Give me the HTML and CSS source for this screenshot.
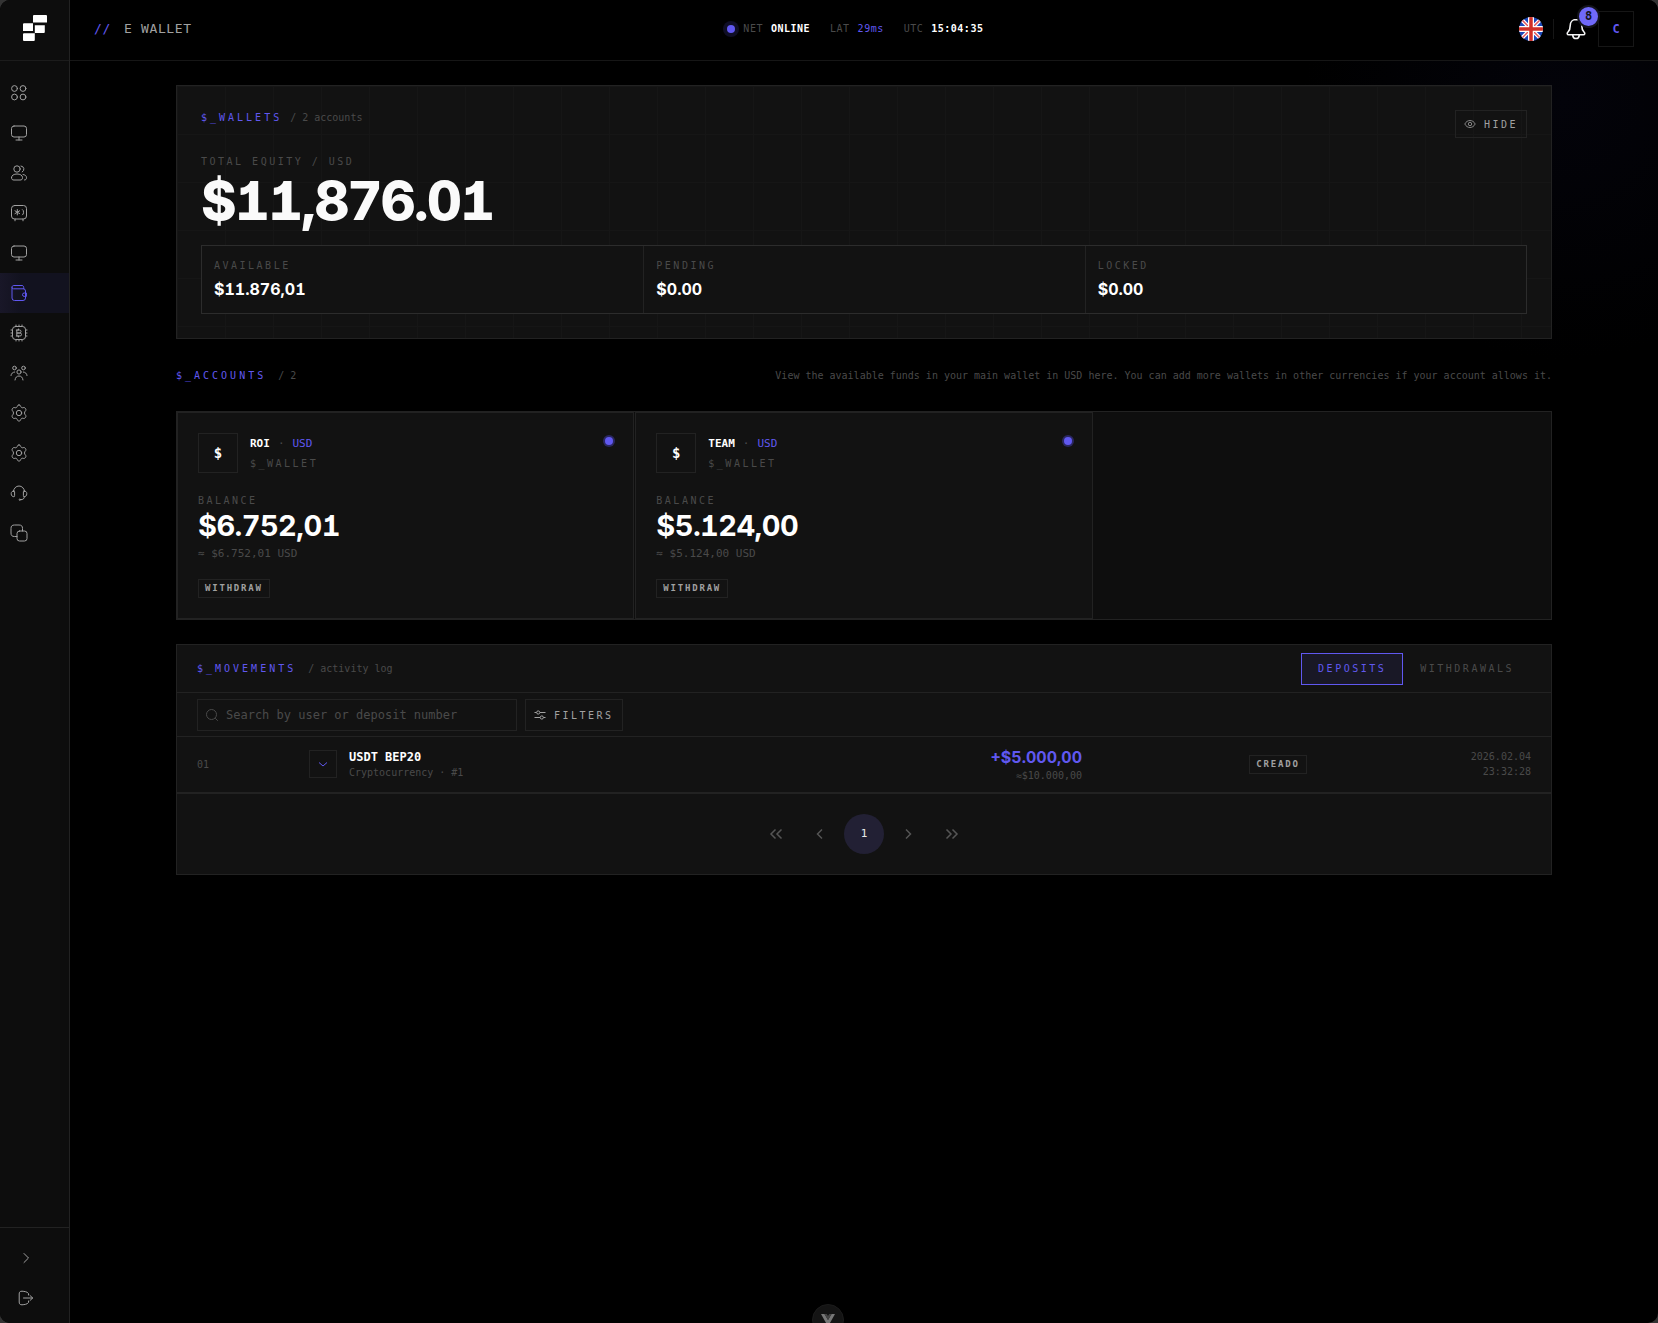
FILE: index.html
```html
<!DOCTYPE html>
<html lang="en">

<head>
    <meta charset="UTF-8">
    <meta name="viewport" content="width=device-width, initial-scale=1.0">
    <title>E Wallet</title>
    <link rel="stylesheet" href="styles.css">
</head>

<body>

    <div class="app">
        <aside class="sidebar">
            <a class="logo" href="#" aria-label="Home">
                <svg width="24" height="27" viewBox="0 0 24 27" fill="#fff">
                    <path d="M11 0h12a1 1 0 0 1 1 1v6.500h-14v-6.500a1 1 0 0 1 1-1z" />
                    <path d="M1 8.300h9v7.700h-10v-6.700a1 1 0 0 1 1-1z" />
                    <path d="M11.800 10.300h10v6.700a1 1 0 0 1-1 1h-9z" />
                    <path d="M1 18.300h10.800v6.700a1 1 0 0 1-1 1h-9.800a1 1 0 0 1-1-1v-5.700a1 1 0 0 1 1-1z" />
                </svg>
            </a>

            <nav class="side-nav" aria-label="Main">
                <a class="side-link" href="#" aria-label="Dashboard">
                    <svg class="icon" viewBox="0 0 18 18"><circle cx="4.500" cy="4.500" r="2.900" /><circle cx="13" cy="4.500" r="2.900" /><circle cx="4.500" cy="13" r="2.900" /><circle cx="13" cy="13" r="2.900" /></svg>
                </a>
                <a class="side-link" href="#" aria-label="Platform">
                    <svg class="icon" viewBox="0 0 18 18"><rect x="1.500" y="2" width="15" height="11" rx="2.500" /><path d="M9 13v3M6 16h6" /></svg>
                </a>
                <a class="side-link" href="#" aria-label="Users">
                    <svg class="icon" viewBox="0 0 18 18"><circle cx="7" cy="5" r="3.200" /><path d="M11 2a3.200 3.200 0 0 1 1.200 6M1.500 13.500c0-2.200 2.400-3.500 5.500-3.500s5.500 1.300 5.500 3.500-1 2.500-2.500 2.500h-6c-1.500 0-2.500-.3-2.500-2.500zM13 10.500c2.200.3 3.500 1.400 3.500 3.200 0 1.500-.6 2.200-2 2.300" /></svg>
                </a>
                <a class="side-link" href="#" aria-label="Vault">
                    <svg class="icon" viewBox="0 0 18 18"><rect x="1.500" y="1.500" width="15" height="13.500" rx="3" /><path d="M5 15v1.800M13 15v1.800M7.300 5.500v5.400M5 6.800l4.600 2.800M9.600 6.800l-4.600 2.800M12.500 5.500c1.500.5 1.500 5 0 5.500" /></svg>
                </a>
                <a class="side-link" href="#" aria-label="Terminal">
                    <svg class="icon" viewBox="0 0 18 18"><rect x="1.500" y="2" width="15" height="11" rx="2.500" /><path d="M9 13v3M6 16h6" /></svg>
                </a>
                <a class="side-link active" href="#" aria-label="E Wallet" aria-current="page">
                    <svg class="icon" viewBox="0 0 18 18"><path d="M2 3.500v10.500a2.500 2.500 0 0 0 2.500 2.500h8.500a2.500 2.500 0 0 0 2.500-2.500v-7a2.200 2.200 0 0 0-2.200-2.200h-9.800a1.500 1.500 0 0 1-1.500-1.500c0-1 .6-1.800 1.800-1.800h8.200c1.300 0 1.800.8 1.800 3.300M16 9h-1.800a1.700 1.700 0 0 0 0 3.400h1.800z" /></svg>
                </a>
                <a class="side-link" href="#" aria-label="Mining">
                    <svg class="icon" viewBox="0 0 18 18"><rect x="2.500" y="2.500" width="13" height="13" rx="3" /><path d="M6 2.500v-1.500M9 2.500v-1.500M12 2.500v-1.500M6 17v-1.500M9 17v-1.500M12 17v-1.500M2.500 6h-1.500M2.500 9h-1.500M2.500 12h-1.500M17 6h-1.500M17 9h-1.500M17 12h-1.500M7.200 6h2.300a1.500 1.500 0 0 1 0 3h-2.300zM7.200 9h2.800a1.500 1.500 0 0 1 0 3h-2.800zM8.500 5v1M8.500 12v1M6.300 6h1M6.300 12h1" /></svg>
                </a>
                <a class="side-link" href="#" aria-label="Team">
                    <svg class="icon" viewBox="0 0 18 18"><circle cx="4.500" cy="4" r="1.800" /><circle cx="13.500" cy="4" r="1.800" /><circle cx="9" cy="8" r="2.100" /><path d="M5 16c.3-2.600 1.800-4 4-4s3.700 1.400 4 4M1 11.500c.2-2 1.600-3.300 3.700-3.500M17 11.500c-.2-2-1.600-3.300-3.700-3.500" /></svg>
                </a>
                <a class="side-link" href="#" aria-label="Settings">
                    <svg class="icon" viewBox="0 0 18 18"><path d="M9 1c1.300 0 1.500.6 1.800 1.600.3.900 1.200 1.400 2.200 1.100 1.100-.3 1.900-.2 2.600 1 .6 1.100.4 1.700-.4 2.500-.9 1-.9 2.600 0 3.600.8.8 1 1.400.4 2.500-.7 1.200-1.500 1.300-2.600 1-1-.3-1.900.2-2.200 1.100-.3 1-.5 1.600-1.800 1.600s-1.500-.6-1.800-1.600c-.3-.9-1.200-1.400-2.200-1.100-1.100.3-1.900.2-2.600-1-.6-1.100-.4-1.700.4-2.500.9-1 .9-2.600 0-3.600-.8-.8-1-1.400-.4-2.500.7-1.200 1.500-1.300 2.600-1 1 .3 1.900-.2 2.200-1.100.3-1 .5-1.600 1.800-1.600z" /><circle cx="9" cy="9" r="2.700" /></svg>
                </a>
                <a class="side-link" href="#" aria-label="Configuration">
                    <svg class="icon" viewBox="0 0 18 18"><path d="M9 1c1.300 0 1.500.6 1.800 1.600.3.900 1.200 1.400 2.200 1.100 1.100-.3 1.900-.2 2.600 1 .6 1.100.4 1.700-.4 2.500-.9 1-.9 2.600 0 3.600.8.8 1 1.400.4 2.500-.7 1.200-1.500 1.300-2.600 1-1-.3-1.900.2-2.200 1.100-.3 1-.5 1.600-1.800 1.600s-1.500-.6-1.800-1.600c-.3-.9-1.200-1.400-2.200-1.100-1.100.3-1.900.2-2.600-1-.6-1.100-.4-1.700.4-2.500.9-1 .9-2.600 0-3.600-.8-.8-1-1.400-.4-2.500.7-1.200 1.500-1.300 2.600-1 1 .3 1.900-.2 2.200-1.100.3-1 .5-1.600 1.800-1.600z" /><circle cx="9" cy="9" r="2.700" /></svg>
                </a>
                <a class="side-link" href="#" aria-label="Support">
                    <svg class="icon" viewBox="0 0 18 18"><path d="M3.500 7.500a5.500 5.500 0 0 1 11 0M3.800 7c-1.500 0-2.600.8-2.600 2.700s1.100 3 2.600 3c.7 0 .8-.4.800-1v-3.700c0-.6-.1-1-.8-1zM14.200 7c1.500 0 2.600.8 2.600 2.700s-1.100 3-2.600 3c-.7 0-.8-.4-.8-1v-3.700c0-.6.1-1 .8-1zM14.300 12.700c0 2-1 3-3.500 3M10.800 15.700c0-.8-1.800-.8-1.800 0s1.800.8 1.800 0z" /></svg>
                </a>
                <a class="side-link" href="#" aria-label="Copy">
                    <svg class="icon" viewBox="0 0 18 18"><rect x="7" y="7" width="10" height="10" rx="2.500" /><path d="M7 12.500h-2.500c-2.500 0-3.500-1-3.500-3.500v-4.500c0-2.500 1-3.500 3.500-3.500h4.500c2.500 0 3.500 1 3.500 3.500v2.500" /></svg>
                </a>
            </nav>

            <div class="side-foot">
                <button class="side-button" type="button" aria-label="Expand menu">
                    <svg class="icon" viewBox="0 0 18 18"><path d="M7 4.500l4.500 4.500-4.500 4.500" /></svg>
                </button>
                <button class="side-button" type="button" aria-label="Log out">
                    <svg class="icon" viewBox="0 0 18 18"><path d="M11.500 6v-1.500c-1.500-2-4-2-6.500-2.300-2 0-2.800.8-2.800 2.800v8c0 2 .8 2.800 2.800 2.800 2.500-.3 5-.3 6.500-2.300v-1.500M6.500 9h9M13 6.500l2.700 2.500-2.700 2.500" /></svg>
                </button>
            </div>
        </aside>

        <div class="content">
            <header class="topbar">
                <div class="page-name">
                    <span class="accent">//</span>
                    <h1 class="page-title">E WALLET</h1>
                </div>

                <div class="status">
                    <div class="status-item"><i class="live-dot"></i><span>NET</span><b>ONLINE</b></div>
                    <div class="status-item"><span>LAT</span><span class="accent">29ms</span></div>
                    <div class="status-item"><span>UTC</span><b>15:04:35</b></div>
                </div>

                <div class="tools">
                    <button class="flag" type="button" aria-label="Language: English">
                        <svg width="24" height="24" viewBox="0 0 24 24">
                            <defs><clipPath id="flag-clip"><circle cx="12" cy="12" r="12" /></clipPath></defs>
                            <g clip-path="url(#flag-clip)">
                                <path fill="#1a47b8" d="M0 0h24v24h-24z" />
                                <path stroke="#fff" stroke-width="3.800" d="M0 0l24 24M24 0l-24 24" />
                                <path stroke="#e0535a" stroke-width="1.500" d="M0 0l24 24M24 0l-24 24" />
                                <path stroke="#fff" stroke-width="6" d="M12 0v24M0 12h24" />
                                <path stroke="#d03027" stroke-width="3.500" d="M12 0v24M0 12h24" />
                            </g>
                        </svg>
                    </button>
                    <span class="tools-line"></span>
                    <button class="bell" type="button" aria-label="Notifications">
                        <svg width="20" height="22" viewBox="0 0 20 22" fill="none" stroke="#f4f4f5" stroke-width="1.600" stroke-linejoin="round">
                            <path d="M10 1.500c-3.500 0-5.800 2.500-5.800 6.200 0 3.300-.6 4.700-2.200 6.300-1.300 1.300-1 2.800.8 2.800h14.400c1.800 0 2.100-1.500.8-2.800-1.600-1.600-2.200-3-2.200-6.300 0-3.700-2.300-6.200-5.800-6.200zM6.700 17.300c.3 2 1.500 3.200 3.300 3.200s3-1.200 3.300-3.200" />
                        </svg>
                        <span class="badge">8</span>
                    </button>
                    <button class="avatar" type="button" aria-label="Account">C</button>
                </div>
            </header>

            <main class="main">
                <section class="hero">
                    <div class="hero-head">
                        <div class="heading">
                            <h2 class="heading-title">$_WALLETS</h2>
                            <span class="heading-note">/ 2 accounts</span>
                        </div>
                        <button class="outline-button" type="button">
                            <svg width="12" height="12" viewBox="0 0 12 12" fill="none" stroke="currentColor" stroke-width=".8"><path d="M.8 6c1.200-2.300 3-3.500 5.200-3.500s4 1.200 5.200 3.500c-1.200 2.300-3 3.500-5.200 3.500s-4-1.200-5.200-3.500z" /><circle cx="6" cy="6" r="1.700" /></svg>
                            HIDE
                        </button>
                    </div>
                    <div class="label">TOTAL EQUITY / USD</div>
                    <div class="equity">$11,876.01</div>
                    <div class="stats">
                        <div class="stat">
                            <div class="label">AVAILABLE</div>
                            <div class="stat-value">$11.876,01</div>
                        </div>
                        <div class="stat">
                            <div class="label">PENDING</div>
                            <div class="stat-value">$0.00</div>
                        </div>
                        <div class="stat">
                            <div class="label">LOCKED</div>
                            <div class="stat-value">$0.00</div>
                        </div>
                    </div>
                </section>

                <div class="accounts-head">
                    <div class="heading wide">
                        <h2 class="heading-title">$_ACCOUNTS</h2>
                        <span class="heading-note">/ 2</span>
                    </div>
                    <p class="heading-note">View the available funds in your main wallet in USD here. You can add more wallets in other currencies if your account allows it.</p>
                </div>

                <section class="accounts">
                    <article class="account">
                        <div class="account-head">
                            <span class="coin">$</span>
                            <div class="account-names">
                                <div class="account-name"><b>ROI</b><span class="muted">·</span><span class="accent">USD</span></div>
                                <div class="label">$_WALLET</div>
                            </div>
                            <i class="account-dot"></i>
                        </div>
                        <div class="label">BALANCE</div>
                        <div class="balance">$6.752,01</div>
                        <div class="approx">≈ $6.752,01 USD</div>
                        <button class="tag" type="button">WITHDRAW</button>
                    </article>
                    <article class="account">
                        <div class="account-head">
                            <span class="coin">$</span>
                            <div class="account-names">
                                <div class="account-name"><b>TEAM</b><span class="muted">·</span><span class="accent">USD</span></div>
                                <div class="label">$_WALLET</div>
                            </div>
                            <i class="account-dot"></i>
                        </div>
                        <div class="label">BALANCE</div>
                        <div class="balance">$5.124,00</div>
                        <div class="approx">≈ $5.124,00 USD</div>
                        <button class="tag" type="button">WITHDRAW</button>
                    </article>
                </section>

                <section class="movements">
                    <div class="movements-head">
                        <div class="heading wide">
                            <h2 class="heading-title">$_MOVEMENTS</h2>
                            <span class="heading-note">/ activity log</span>
                        </div>
                        <div class="tabs">
                            <button class="tab active" type="button">DEPOSITS</button>
                            <button class="tab" type="button">WITHDRAWALS</button>
                        </div>
                    </div>

                    <div class="filters">
                        <label class="search">
                            <svg width="12" height="12" viewBox="0 0 12 12" fill="none" stroke="currentColor"><circle cx="5.500" cy="5.500" r="5" /><path d="M9.200 9.200l2.600 2.600" /></svg>
                            <input type="text" placeholder="Search by user or deposit number" aria-label="Search by user or deposit number">
                        </label>
                        <button class="outline-button" type="button">
                            <svg width="12" height="12" viewBox="0 0 12 12" fill="none" stroke="currentColor"><path d="M.5 3.500h2M6 3.500h5.500M.5 8.500h5.500M9.500 8.500h2" /><circle cx="4.200" cy="3.500" r="1.600" /><circle cx="7.800" cy="8.500" r="1.600" /></svg>
                            FILTERS
                        </button>
                    </div>

                    <table class="log">
                        <colgroup>
                            <col class="col-index">
                            <col>
                            <col class="col-amount">
                            <col class="col-state">
                            <col class="col-date">
                        </colgroup>
                        <tbody>
                            <tr>
                                <td class="muted">01</td>
                                <td>
                                    <div class="method">
                                        <button class="toggle" type="button" aria-label="Show details">
                                            <svg width="12" height="12" viewBox="0 0 12 12" fill="none" stroke="currentColor"><path d="M2 4.500l4 3.500 4-3.500" /></svg>
                                        </button>
                                        <div>
                                            <div class="method-name">USDT BEP20</div>
                                            <div class="muted">Cryptocurrency · #1</div>
                                        </div>
                                    </div>
                                </td>
                                <td class="right">
                                    <div class="amount">+$5.000,00</div>
                                    <div class="muted">≈$10.000,00</div>
                                </td>
                                <td class="center"><span class="tag">CREADO</span></td>
                                <td class="date muted">2026.02.04 23:32:28</td>
                            </tr>
                        </tbody>
                    </table>

                    <nav class="pager" aria-label="Pagination">
                        <button class="page" type="button" aria-label="First page">
                            <svg width="14" height="12" viewBox="0 0 14 12"><path d="M6.500 1.500l-4.500 4.500 4.500 4.500M12.500 1.500l-4.500 4.500 4.500 4.500" /></svg>
                        </button>
                        <button class="page" type="button" aria-label="Previous page">
                            <svg width="14" height="12" viewBox="0 0 14 12"><path d="M9 1.500l-4.500 4.500 4.500 4.500" /></svg>
                        </button>
                        <button class="page current" type="button" aria-current="page">1</button>
                        <button class="page" type="button" aria-label="Next page">
                            <svg width="14" height="12" viewBox="0 0 14 12"><path d="M5 1.500l4.500 4.500-4.500 4.500" /></svg>
                        </button>
                        <button class="page" type="button" aria-label="Last page">
                            <svg width="14" height="12" viewBox="0 0 14 12"><path d="M1.500 1.500l4.500 4.500-4.500 4.500M7.500 1.500l4.500 4.500-4.500 4.500" /></svg>
                        </button>
                    </nav>
                </section>
            </main>
        </div>

        <button class="devtools" type="button" aria-label="Toggle devtools">
            <svg width="16" height="14" viewBox="0 0 16 14"><path fill="#777" d="M1 0h3.500l3.500 6 3.500-6h3.500l-7 12.500z" /><path fill="#444" d="M4.500 0h2.300l1.200 2 1.200-2h2.300l-3.500 6z" /></svg>
        </button>
    </div>

</body>

</html>
```
FILE: styles.css
```css
* {
    box-sizing: border-box;
}

:root {
    --accent: #6058f0;
    --line: #222;
    --panel: #121212;
    --muted: #4a4a4a;
    --soft: #a1a1a1;
    --mono: "DejaVu Sans Mono", monospace;
    --sans: Inter, sans-serif;
}

body {
    margin: 0;
    background-color: #333;
    color: #fff;
    font-family: var(--mono);
    font-size: 10px;
    line-height: 15px;
}

h1,
h2,
p {
    margin: 0;
    font-size: inherit;
    font-weight: normal;
}

button,
input {
    font: inherit;
    color: inherit;
    background: none;
    border: none;
    padding: 0;
}

button {
    cursor: pointer;
}

svg {
    display: block;
    flex: none;
}

.accent {
    color: var(--accent);
}

.muted {
    color: var(--muted);
}

.app {
    display: flex;
    min-height: 100vh;
    background-color: #000;
    border-radius: 10px;
    overflow: hidden;
}

/* sidebar */
.sidebar {
    display: flex;
    flex-direction: column;
    flex: none;
    width: 70px;
    background-color: #0d0d0d;
    border-right: 1px solid var(--line);
}

.logo {
    display: flex;
    align-items: center;
    justify-content: center;
    height: 61px;
    padding-bottom: 4px;
    border-bottom: 1px solid #1c1c1c;
}

.side-nav {
    flex: 1;
    padding-top: 12px;
}

.side-link,
.side-button {
    display: flex;
    align-items: center;
    width: 100%;
    height: 40px;
    padding-left: 10px;
    color: var(--soft);
}

.side-button {
    padding-left: 17px;
}

.side-link.active {
    color: var(--accent);
    background: linear-gradient(90deg, #191728, #12121f 30%);
}

.icon {
    width: 18px;
    height: 18px;
    fill: none;
    stroke: currentColor;
    stroke-linecap: round;
    stroke-linejoin: round;
}

.side-foot {
    padding: 10px 0 5px;
    border-top: 1px solid var(--line);
}

/* top bar */
.content {
    flex: 1;
    min-width: 0;
    background: radial-gradient(circle at 94% 100px, #03030a, transparent 260px);
}

.topbar {
    display: flex;
    align-items: center;
    justify-content: space-between;
    height: 61px;
    padding: 0 24px 2px;
    background-color: #000;
    border-bottom: 1px solid #161616;
}

.page-name {
    display: flex;
    gap: 13px;
    padding-bottom: 2px;
    font-size: 13px;
    letter-spacing: 0.05em;
}

.page-title {
    color: var(--soft);
}

.status {
    display: flex;
    gap: 20px;
    padding-bottom: 2px;
    letter-spacing: 0.05em;
    color: var(--muted);
}

.status-item {
    display: flex;
    align-items: center;
    gap: 8px;
}

.status-item b {
    color: #fff;
}

.live-dot {
    width: 8px;
    height: 8px;
    margin-top: 2px;
    border-radius: 50%;
    background-color: var(--accent);
    box-shadow: 0 0 0 4px #0f0e26;
}

.tools {
    display: flex;
    align-items: center;
}

.tools-line {
    width: 1px;
    height: 20px;
    margin: 0 12px 0 10px;
    background-color: #161616;
}

.bell {
    position: relative;
    margin-right: 12px;
}

.badge {
    position: absolute;
    top: -13px;
    left: 11px;
    width: 23px;
    height: 23px;
    border: 2px solid #14141c;
    border-radius: 50%;
    background-color: #7069fa;
    color: #14141c;
    font-size: 12px;
    line-height: 18px;
    font-weight: bold;
}

.avatar {
    width: 36px;
    height: 36px;
    border: 1px solid #161616;
    color: var(--accent);
    font-size: 12px;
    font-weight: bold;
}

/* shared pieces */
.main {
    display: flex;
    flex-direction: column;
    gap: 24px;
    max-width: 1424px;
    margin: 0 auto;
    padding: 24px;
}

.heading {
    display: flex;
    gap: 8px;
}

.heading.wide {
    gap: 12px;
}

.heading-title {
    color: var(--accent);
    letter-spacing: 3px;
}

.heading-note {
    color: var(--muted);
}

.label {
    color: var(--muted);
    letter-spacing: 0.25em;
}

.outline-button {
    display: flex;
    align-items: center;
    gap: 8px;
    height: 28px;
    padding: 0 8px;
    border: 1px solid var(--line);
    color: var(--soft);
    letter-spacing: 0.25em;
}

.tag {
    display: inline-block;
    height: 19px;
    padding: 0 6px;
    border: 1px solid var(--line);
    color: var(--soft);
    font-size: 9px;
    line-height: 17px;
    font-weight: bold;
    letter-spacing: 0.2em;
}

.equity,
.stat-value,
.balance,
.amount {
    font-family: var(--sans);
    font-weight: bold;
    font-feature-settings: "tnum", "cv01";
}

/* total equity */
.hero {
    padding: 24px;
    border: 1px solid var(--line);
    background-color: var(--panel);
    background-image:
        linear-gradient(90deg, #161616 1px, transparent 1px),
        linear-gradient(#161616 1px, transparent 1px);
    background-size: 48px 48px;
}

.hero-head {
    display: flex;
    justify-content: space-between;
    align-items: flex-start;
    margin-bottom: 16px;
}

.equity {
    margin: 4px 0 16px;
    font-size: 54px;
    line-height: 56px;
    font-weight: 800;
    letter-spacing: -0.03em;
    color: #fafafa;
}

.stats {
    display: grid;
    grid-template-columns: repeat(3, 1fr);
    border: 1px solid #2c2c2c;
    background-color: var(--panel);
}

.stat {
    padding: 12px;
}

.stat + .stat {
    border-left: 1px solid var(--line);
}

.stat-value {
    margin-top: 4px;
    font-size: 16px;
    line-height: 24px;
}

/* accounts */
.accounts-head {
    display: flex;
    justify-content: space-between;
    height: 24px;
    line-height: 26px;
}

.accounts {
    display: grid;
    grid-template-columns: repeat(3, 1fr);
    gap: 1px;
    border: 1px solid var(--line);
    background-color: #0e0e0e;
}

.account {
    padding: 20px;
    border: 1px solid var(--line);
    background-color: var(--panel);
}

.account-head {
    display: flex;
    gap: 12px;
    margin-bottom: 20px;
}

.coin {
    width: 40px;
    height: 40px;
    border: 1px solid var(--line);
    font-size: 14px;
    line-height: 38px;
    font-weight: bold;
    text-align: center;
}

.account-names {
    flex: 1;
    line-height: 19px;
}

.account-name {
    display: flex;
    gap: 8px;
    font-size: 11px;
    line-height: 21px;
}

.account-dot {
    width: 8px;
    height: 8px;
    margin-top: 4px;
    border-radius: 50%;
    background-color: var(--accent);
    box-shadow: 0 0 0 2px #2a2760;
}

.balance {
    font-size: 29px;
    line-height: 36px;
    letter-spacing: -0.02em;
}

.approx {
    margin-bottom: 15px;
    color: var(--muted);
    font-size: 11px;
    line-height: 20px;
}

/* movements */
.movements {
    border: 1px solid var(--line);
    background-color: var(--panel);
}

.movements-head {
    display: flex;
    align-items: center;
    justify-content: space-between;
    height: 48px;
    padding: 0 20px;
    border-bottom: 1px solid var(--line);
}

.tabs {
    display: flex;
}

.tab {
    height: 32px;
    padding: 0 16px;
    border: 1px solid transparent;
    color: var(--muted);
    letter-spacing: 0.25em;
}

.tab.active {
    border-color: var(--accent);
    background-color: #191826;
    color: var(--accent);
}

.filters {
    display: flex;
    gap: 8px;
    padding: 6px 20px 5px;
    border-bottom: 1px solid var(--line);
}

.filters .outline-button {
    height: 32px;
}

.search {
    display: flex;
    align-items: center;
    gap: 8px;
    width: 320px;
    height: 32px;
    padding: 0 8px;
    border: 1px solid var(--line);
    color: var(--muted);
    font-size: 12px;
}

.search input {
    flex: 1;
    min-width: 0;
    outline: none;
}

.search input::placeholder {
    color: var(--muted);
}

.log {
    width: 100%;
    table-layout: fixed;
    border-collapse: collapse;
    border-bottom: 1px solid var(--line);
}

.log td {
    height: 55px;
    padding: 0 20px;
}

.col-index {
    width: 112px;
}

.col-amount {
    width: 160px;
}

.col-state {
    width: 352px;
}

.col-date {
    width: 97px;
}

.right {
    text-align: right;
}

.center {
    text-align: center;
}

.log .date {
    padding-left: 8px;
    text-align: right;
}

.method {
    display: flex;
    align-items: center;
    gap: 12px;
}

.toggle {
    display: flex;
    align-items: center;
    justify-content: center;
    width: 28px;
    height: 28px;
    border: 1px solid var(--line);
    color: var(--accent);
}

.method-name {
    font-size: 12px;
    line-height: 16px;
    font-weight: bold;
}

.amount {
    color: var(--accent);
    font-size: 16px;
    line-height: 22px;
}

.pager {
    display: flex;
    justify-content: center;
    gap: 4px;
    padding: 20px;
    border-top: 1px solid var(--line);
}

.page {
    display: flex;
    align-items: center;
    justify-content: center;
    width: 40px;
    height: 40px;
    border-radius: 50%;
    color: #555;
}

.page svg {
    fill: none;
    stroke: currentColor;
    stroke-width: 1.5;
}

.page.current {
    background-color: #222034;
    color: #e8e8e8;
    font-size: 11px;
}

/* floating button, half below the window edge */
.devtools {
    position: fixed;
    bottom: -13px;
    left: 50%;
    display: flex;
    justify-content: center;
    width: 32px;
    height: 32px;
    margin-left: -17px;
    padding-top: 9px;
    border: 1px solid #1c1c1c;
    border-radius: 50%;
    background-color: #141414;
}
```
